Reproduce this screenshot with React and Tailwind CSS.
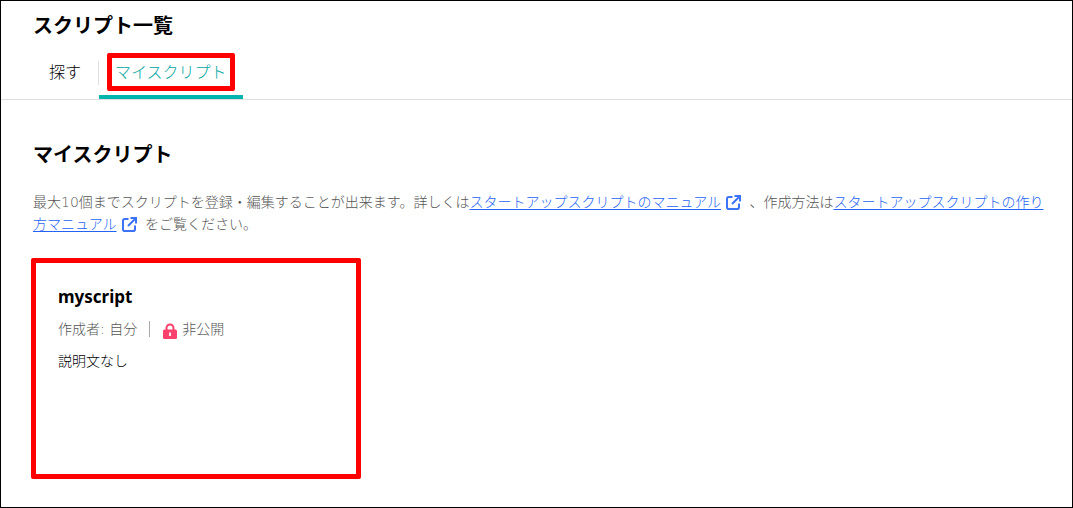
import React, { useState } from "react";

const tabs = [
  { id: "search", label: "探す" },
  { id: "mine", label: "マイスクリプト" },
];

const ExternalIcon = () => (
  <svg
    className="inline-block w-4 h-4 mx-1 align-[-3px]"
    viewBox="0 0 16 16"
    fill="none"
    stroke="#3d73f5"
    strokeWidth="2"
    aria-hidden="true"
  >
    <path d="M7.5 3H3.8Q2 3 2 4.8V13.2Q2 15 3.8 15H12.2Q14 15 14 13.2V9.5" />
    <path d="M9.5 2H15V7.5M14.5 2.5L7 10" />
  </svg>
);

const LockIcon = () => (
  <svg className="w-4 h-4 mt-1" viewBox="0 0 16 16" aria-hidden="true">
    <path d="M4.5 8V5a3.5 3.5 0 0 1 7 0v3" fill="none" stroke="#f8416c" strokeWidth="2" />
    <rect x="1" y="6.5" width="14" height="9.5" rx="1.5" fill="#f8416c" />
    <path d="M8 9.5v3.5" stroke="#fff" strokeWidth="1.8" />
  </svg>
);

const ManualLink = ({ children }) => (
  <>
    <a href="#manual" className="text-[#2463f5] underline underline-offset-2">
      {children}
    </a>
    <ExternalIcon />
  </>
);

const App = () => {
  const [active, setActive] = useState("mine");

  return (
    <div className="min-h-screen border border-black bg-white text-black font-light font-['DejaVu_Sans','Noto_Sans_CJK_JP',sans-serif]">
      <header className="px-8 pt-2.5 border-b border-[#dedede]">
        <h1 className="text-xl leading-[30px] font-bold">スクリプト一覧</h1>
        <nav className="flex items-end gap-0.5 mt-1.5">
          {tabs.map((tab) => (
            <button
              key={tab.id}
              type="button"
              onClick={() => setActive(tab.id)}
              className={
                active === tab.id
                  ? "relative h-13 px-4 pt-1 border-b-4 border-[#00b5ad] text-[#00a59d]"
                  : "relative h-13 px-4 pt-1 border-b-4 border-transparent"
              }
            >
              {tab.label}
              {tab.id === "search" && (
                <span className="absolute -right-0.5 top-3.5 h-6 w-px bg-[#dedede]" />
              )}
              {active === tab.id && (
                <span className="absolute inset-x-2 top-1.5 bottom-1 border-5 border-[#f00] rounded-xs" />
              )}
            </button>
          ))}
        </nav>
      </header>

      <main className="px-8 pt-10">
        <h2 className="text-xl leading-[30px] font-bold">マイスクリプト</h2>
        <p className="mt-[21px] -mr-4 text-sm leading-[22px] text-[#555]">
          最大10個までスクリプトを登録・編集することが出来ます。詳しくは
          <ManualLink>スタートアップスクリプトのマニュアル</ManualLink>
          {" 、作成方法は"}
          <ManualLink>スタートアップスクリプトの作り方マニュアル</ManualLink>
          {" をご覧ください。"}
        </p>

        <article className="mt-[23px] -ml-0.5 w-full max-w-[330px] min-h-[221px] border-5 border-[#f00] rounded-xs px-[22px] py-5">
          <h3 className="text-[17px] leading-7 font-bold font-['Noto_Sans','Noto_Sans_CJK_JP',sans-serif]">
            myscript
          </h3>
          <div className="flex items-center mt-1 text-sm leading-7 text-[#555]">
            <span>作成者: 自分</span>
            <span className="mx-3 h-4 w-px bg-[#aaa]" />
            <LockIcon />
            <span className="ml-1">非公開</span>
          </div>
          <p className="mt-1 text-sm leading-7">説明文なし</p>
        </article>
      </main>
    </div>
  );
};

export default App;
